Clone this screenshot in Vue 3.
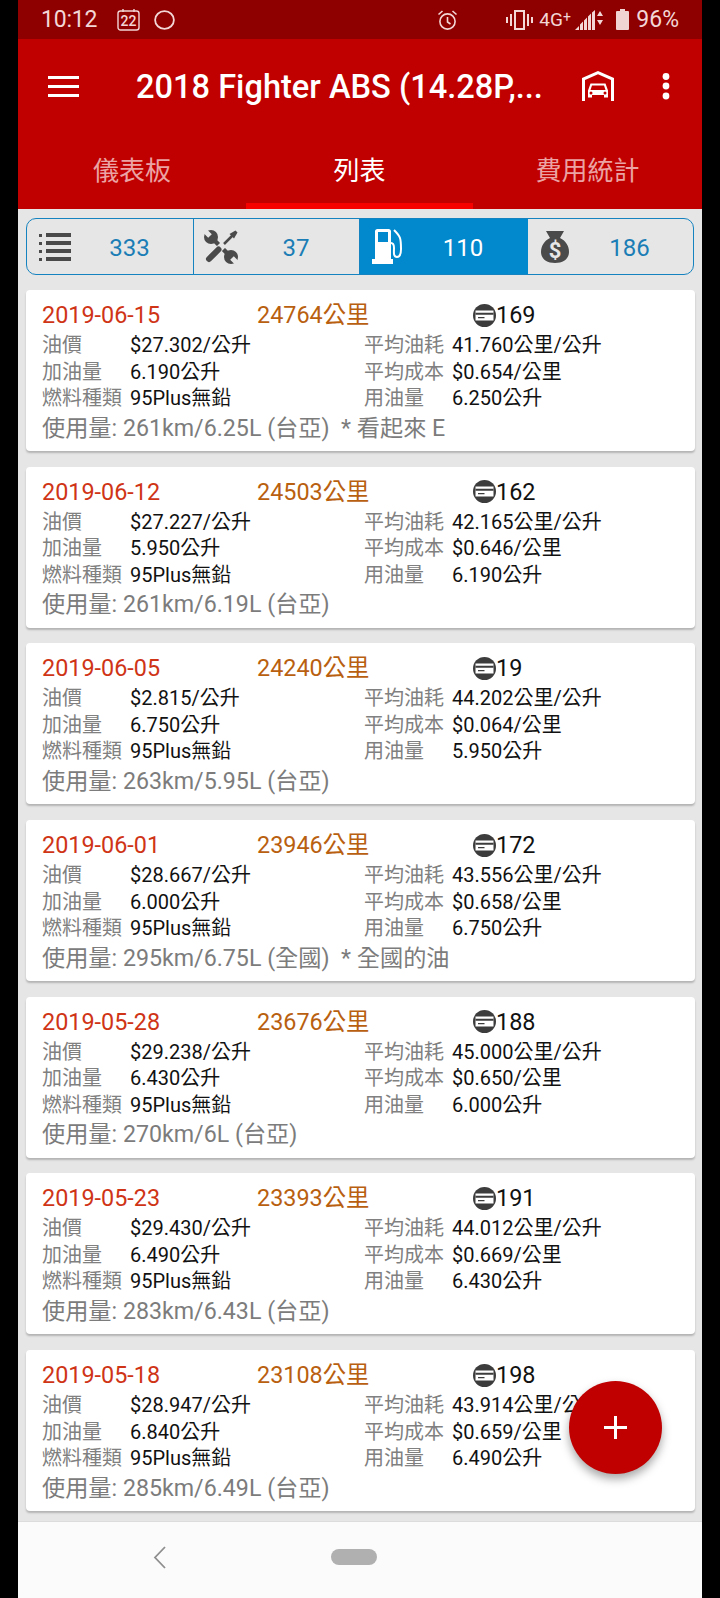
<script setup>
const tabs = [
  { label: "儀表板" },
  { label: "列表", active: true },
  { label: "費用統計" },
];

const counts = [
  { icon: "list", value: 333 },
  { icon: "tools", value: 37 },
  { icon: "fuel", value: 110, active: true },
  { icon: "money", value: 186 },
];

const records = [
  { date: "2019-06-15", odo: "24764公里", card: 169, price: "$27.302/公升", avg: "41.760公里/公升", fill: "6.190公升", cost: "$0.654/公里", used: "6.250公升", note: "使用量: 261km/6.25L (台亞)  * 看起來 E" },
  { date: "2019-06-12", odo: "24503公里", card: 162, price: "$27.227/公升", avg: "42.165公里/公升", fill: "5.950公升", cost: "$0.646/公里", used: "6.190公升", note: "使用量: 261km/6.19L (台亞)" },
  { date: "2019-06-05", odo: "24240公里", card: 19, price: "$2.815/公升", avg: "44.202公里/公升", fill: "6.750公升", cost: "$0.064/公里", used: "5.950公升", note: "使用量: 263km/5.95L (台亞)" },
  { date: "2019-06-01", odo: "23946公里", card: 172, price: "$28.667/公升", avg: "43.556公里/公升", fill: "6.000公升", cost: "$0.658/公里", used: "6.750公升", note: "使用量: 295km/6.75L (全國)  * 全國的油" },
  { date: "2019-05-28", odo: "23676公里", card: 188, price: "$29.238/公升", avg: "45.000公里/公升", fill: "6.430公升", cost: "$0.650/公里", used: "6.000公升", note: "使用量: 270km/6L (台亞)" },
  { date: "2019-05-23", odo: "23393公里", card: 191, price: "$29.430/公升", avg: "44.012公里/公升", fill: "6.490公升", cost: "$0.669/公里", used: "6.430公升", note: "使用量: 283km/6.43L (台亞)" },
  { date: "2019-05-18", odo: "23108公里", card: 198, price: "$28.947/公升", avg: "43.914公里/公升", fill: "6.840公升", cost: "$0.659/公里", used: "6.490公升", note: "使用量: 285km/6.49L (台亞)" },
];
</script>

<template>
  <div class="screen">
    <div class="phone">
      <header class="status">
        <span class="time">10:12</span>
        <svg class="cal" width="23" height="23" viewBox="0 0 23 23" fill="none" stroke="#f3d6d6" stroke-width="1.4">
          <rect x="1" y="3" width="21" height="19" rx="2.5" />
          <path d="M6 1v3M17 1v3" />
          <text x="11.5" y="18" text-anchor="middle" class="cal-num" fill="#f3d6d6" stroke="none">22</text>
        </svg>
        <svg class="ring" width="21" height="20" viewBox="0 0 21 20" fill="none" stroke="#f3d6d6" stroke-width="1.8">
          <ellipse cx="10.5" cy="10" rx="9.4" ry="8.8" />
        </svg>
        <span class="spacer"></span>
        <svg class="alarm" width="21" height="22" viewBox="0 0 21 22" fill="none" stroke="#f3d6d6" stroke-width="1.6">
          <circle cx="10.5" cy="12.5" r="7.6" />
          <path d="M10.5 8v5l3 2M1.5 5.5L5.5 2M19.5 5.5L15.5 2" />
        </svg>
        <svg class="vibrate" width="27" height="20" viewBox="0 0 27 20" fill="#f3d6d6">
          <path d="M8 0h11v20H8zM10 2v16h7V2z" fill-rule="evenodd" />
          <path d="M4 4h2v12H4zM21 4h2v12h-2zM0 7h2v6H0zM25 7h2v6h-2z" />
        </svg>
        <span class="net">4G<sup>+</sup></span>
        <svg class="signal" width="28" height="22" viewBox="0 0 28 22" fill="#f3d6d6">
          <path d="M0 21l4-4v4zM5 21v-5.500l3-3V21zM9 21V11.500l3-3V21zM13 21V7.500l3-3V21zM17 21V3.500L20 1v20z" />
          <path d="M25 2l3 5h-6zM22 11h6l-3 5z" />
        </svg>
        <svg class="battery" width="13" height="21" viewBox="0 0 13 21" fill="#f0d4d4">
          <path d="M4 0h5v2h3a1 1 0 0 1 1 1v17a1 1 0 0 1-1 1H1a1 1 0 0 1-1-1V3a1 1 0 0 1 1-1h3z" />
        </svg>
        <span class="pct">96%</span>
      </header>

      <div class="toolbar">
        <svg class="burger" width="31" height="21" viewBox="0 0 31 21" fill="#fff">
          <path d="M0 0h31v3H0zM0 9h31v3H0zM0 18h31v3H0z" />
        </svg>
        <h1 class="title">2018 Fighter ABS (14.28P,...</h1>
        <svg class="garage" width="32" height="30" viewBox="0 0 32 30" fill="#fff">
          <path d="M16 0L32 7v23h-3V9L16 3.300 3 9v21H0V7z" />
          <path d="M8.500 12.500h15l2.500 7v7h-4v-2.500H10v2.500H6v-7zM10 14.500l-1.500 4.500h15L22 14.500zM9 20.500a1.500 1.500 0 1 0 0 3 1.500 1.500 0 0 0 0-3zM23 20.500a1.500 1.500 0 1 0 0 3 1.500 1.500 0 0 0 0-3z" fill-rule="evenodd" />
        </svg>
        <svg class="more" width="8" height="27" viewBox="0 0 8 27" fill="#fff">
          <circle cx="4" cy="3.500" r="3.400" />
          <circle cx="4" cy="13" r="3.400" />
          <circle cx="4" cy="23" r="3.400" />
        </svg>
      </div>

      <nav class="tabs">
        <div v-for="t in tabs" :key="t.label" class="tab" :class="{ on: t.active }">{{ t.label }}</div>
      </nav>

      <main class="content">
        <div class="segments">
          <div v-for="c in counts" :key="c.icon" class="seg" :class="{ on: c.active }">
            <span class="seg-icon">
              <svg v-if="c.icon === 'list'" width="32" height="28" viewBox="0 0 32 28" fill="#4a4a4a">
                <path d="M0 1h3v3H0zM0 9h3v3H0zM0 17h3v3H0zM0 25h3v3H0zM7 0h25v4H7zM7 8h25v4H7zM7 16h25v4H7zM7 24h25v4H7z" />
              </svg>
              <svg v-else-if="c.icon === 'tools'" width="34" height="34" viewBox="0 0 34 34" fill="#4a4a4a">
                <path d="M7 7L27 27" stroke="#4a4a4a" stroke-width="4.500" />
                <circle cx="7" cy="7" r="7" />
                <circle cx="27" cy="27" r="7" />
                <path d="M.8-2.800L7.800 4.200 4.200 7.800-2.800.8zM33.200 36.800L26.200 29.800 29.800 26.200 36.800 33.200z" fill="#e6e6e6" />
                <path d="M25 9L8 26" stroke="#e6e6e6" stroke-width="7" />
                <path d="M29 5L20 14" stroke="#4a4a4a" stroke-width="2.500" />
                <path d="M31.500 0.500l2 2-3.500 6-4.500-4.500z" />
                <path d="M14.500 19.500L5 29" stroke="#4a4a4a" stroke-width="6" stroke-linecap="round" />
              </svg>
              <svg v-else-if="c.icon === 'fuel'" width="31" height="35" viewBox="0 0 31 35" fill="#fff">
                <path d="M3 2.500A2.500 2.500 0 0 1 5.500 0h11A2.500 2.500 0 0 1 19 2.500V30h2v5H0v-5h3zM6 3v10h10V3z" fill-rule="evenodd" />
                <path d="M22 1c3 3 5 5 6 8s1 6 1 11c0 3 0 8-4 8s-3-5-3-9-1-5-3-5" fill="none" stroke="#fff" stroke-width="2" />
              </svg>
              <svg v-else width="28" height="32" viewBox="0 0 28 32" fill="#4a4a4a">
                <path d="M5 0h18l-4 7c6 3 9 8 9 14 0 7-6 11-14 11S0 28 0 21C0 15 3 10 9 7z" />
                <text x="14" y="27" text-anchor="middle" class="dollar" fill="#e6e6e6">$</text>
              </svg>
            </span>
            <span class="seg-num">{{ c.value }}</span>
          </div>
        </div>

        <section class="list">
          <article v-for="r in records" :key="r.date" class="card">
            <div class="head">
              <span class="date">{{ r.date }}</span>
              <span class="odo">{{ r.odo }}</span>
              <span class="station">
                <svg width="23" height="23" viewBox="0 0 23 23">
                  <circle cx="11.500" cy="11.500" r="11.500" fill="#3c3c3c" />
                  <path d="M2.500 6.500h18v10h-18z" fill="#fff" />
                  <path d="M2.500 8.700h18v2h-18zM5 13h6.500v1.300H5z" fill="#3c3c3c" />
                </svg>{{ r.card }}
              </span>
            </div>
            <div class="rows">
              <span class="k">油價</span><span class="v">{{ r.price }}</span>
              <span class="k">平均油耗</span><span class="v">{{ r.avg }}</span>
              <span class="k">加油量</span><span class="v">{{ r.fill }}</span>
              <span class="k">平均成本</span><span class="v">{{ r.cost }}</span>
              <span class="k">燃料種類</span><span class="v">95Plus無鉛</span>
              <span class="k">用油量</span><span class="v">{{ r.used }}</span>
            </div>
            <p class="note">{{ r.note }}</p>
          </article>
        </section>

        <button class="fab" type="button">
          <svg width="23" height="23" viewBox="0 0 23 23" fill="#fff">
            <path d="M10 0h3v10h10v3H13v10h-3V13H0v-3h10z" />
          </svg>
        </button>
      </main>

      <footer class="navbar">
        <svg width="13" height="23" viewBox="0 0 13 23" fill="none" stroke="#8e8e8e" stroke-width="1.800">
          <path d="M12 1L2 11.500 12 22" />
        </svg>
        <span class="pill"></span>
      </footer>
    </div>
  </div>
</template>

<style>
html,
body {
  background: #000;
}
</style>

<style scoped>
.screen {
  width: 720px;
  height: 1598px;
  background: #000;
  font-family: Roboto, "Noto Sans CJK TC", sans-serif;
  overflow: hidden;
}

.phone {
  width: 684px;
  height: 100%;
  margin-left: 18px;
  display: flex;
  flex-direction: column;
  background: #e6e6e6;
}

/* status bar */
.status {
  height: 39px;
  flex: none;
  display: flex;
  align-items: center;
  padding: 0 23px 0 23px;
  background: #8e0000;
  color: #f3d6d6;
}

.time {
  font-size: 23px;
  width: 76px;
  letter-spacing: -0.2px;
}

.cal {
  margin-right: 14px;
}

.cal-num {
  font-family: Roboto, sans-serif;
  font-size: 14px;
  font-weight: 500;
}

.spacer {
  flex: 1;
}

.vibrate {
  margin-left: 48px;
  margin-right: 6px;
}

.net {
  width: 36px;
  font-size: 19px;
  line-height: 1;
}

.net sup {
  font-size: 14px;
  vertical-align: 4px;
  line-height: 0;
}

.signal {
  margin-right: 13px;
}

.pct {
  margin-left: 7px;
  font-size: 23px;
}

/* app bar */
.toolbar {
  height: 94px;
  flex: none;
  display: flex;
  align-items: center;
  background: #c00000;
}

.burger {
  margin-left: 30px;
}

.title {
  flex: none;
  width: 437px;
  margin: 2px 0 0 57px;
  font-size: 32.600px;
  font-weight: 500;
  color: #fff;
  white-space: nowrap;
}

.garage {
  margin-left: 9px;
}

.more {
  margin-left: 48px;
}

.tabs {
  height: 76px;
  flex: none;
  display: grid;
  grid-template-columns: 228px 227px 229px;
  background: #c00000;
}

.tab {
  display: flex;
  align-items: center;
  justify-content: center;
  font-size: 26px;
  color: #eba3a3;
  border-bottom: 6px solid transparent;
}

.tab.on {
  color: #fff;
  border-bottom-color: #f60000;
}

/* list */
.content {
  position: relative;
  flex: 1;
  min-height: 0;
  padding: 9px 7px 0 8px;
  overflow: hidden;
}

.segments {
  width: 668px;
  height: 57px;
  display: grid;
  grid-template-columns: 167px 166px 168px 167px;
  border: 1px solid #1583bf;
  border-radius: 10px;
  overflow: hidden;
  box-sizing: border-box;
}

.seg {
  display: flex;
  align-items: center;
  padding-left: 12px;
  color: #1b7db5;
  border-right: 1px solid #1583bf;
}

.seg:nth-child(2) {
  padding-left: 10px;
}

.seg:nth-child(3),
.seg:nth-child(4) {
  border-right: 0;
}

.seg:nth-child(4) {
  padding-left: 13px;
}

.seg.on {
  background: #0288cc;
  color: #fff;
}

.seg-icon {
  display: flex;
  flex: none;
}

.seg-num {
  flex: 1;
  padding: 3px 5px 0 0;
  text-align: center;
  font-size: 24px;
}

.dollar {
  font-family: Roboto, sans-serif;
  font-size: 22px;
  font-weight: 700;
}

.list {
  margin-top: 15px;
  display: flex;
  flex-direction: column;
  gap: 15.700px;
}

.card {
  height: 161px;
  flex: none;
  box-sizing: border-box;
  padding: 10px 16px 0 16px;
  background: #fff;
  border-radius: 4px;
  box-shadow: 0 2px 2px rgba(0, 0, 0, 0.22);
}

.head {
  display: grid;
  grid-template-columns: 215px 216px 1fr;
  height: 30px;
  align-items: center;
  font-size: 23.400px;
  line-height: 30px;
}

.date {
  color: #cf3416;
}

.odo {
  color: #b95f10;
}

.station {
  display: flex;
  align-items: center;
  color: #111;
}

.rows {
  display: grid;
  grid-template-columns: 88px 234px 88px 1fr;
  grid-auto-rows: 26.500px;
  margin-top: 2px;
  font-size: 20px;
  line-height: 26.500px;
}

.k {
  color: #808080;
  white-space: nowrap;
}

.v {
  color: #111;
  white-space: nowrap;
}

.note {
  margin: 1px 0 0;
  font-size: 23.200px;
  line-height: 30px;
  color: #7c7c7c;
  white-space: pre;
}

.fab {
  position: absolute;
  left: 551px;
  top: 1172px;
  width: 93px;
  height: 93px;
  display: flex;
  align-items: center;
  justify-content: center;
  padding: 0;
  border: 0;
  border-radius: 50%;
  background: #c00000;
  box-shadow: 0 5px 10px rgba(0, 0, 0, 0.35);
}

/* nav */
.navbar {
  position: relative;
  height: 77px;
  flex: none;
  display: flex;
  align-items: center;
  padding: 0 0 6px 135px;
  background: #fbfbfb;
  border-top: 1px solid #dcdcdc;
  box-sizing: border-box;
}

.pill {
  width: 46px;
  height: 16px;
  margin-left: 165px;
  border-radius: 8px;
  background: #b0b0b0;
}
</style>
